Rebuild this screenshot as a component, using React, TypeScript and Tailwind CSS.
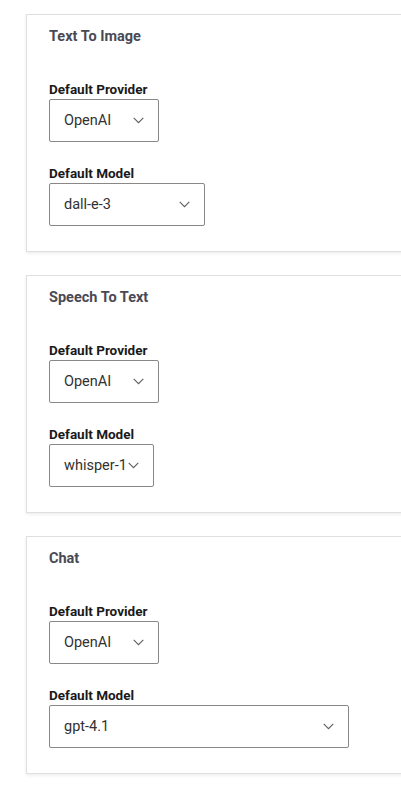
import React from "react";

function Chevron() {
  return (
    <svg width="11" height="7" viewBox="0 0 11 7" fill="none" className="shrink-0">
      <path d="M0.7 0.9 L5.5 5.7 L10.3 0.9" stroke="#605e5c" strokeWidth="1.1" />
    </svg>
  );
}

function Select({ value, width }: { value: string; width: string }) {
  return (
    <div
      className={`${width} h-[43px] border border-[#8a8886] rounded-[2px] flex items-center justify-between pl-[14px] pr-[14px] text-[14.5px] text-[#323130] bg-white`}
    >
      <span className="whitespace-nowrap">{value}</span>
      <Chevron />
    </div>
  );
}

function Card({ title, model, modelWidth }: { title: string; model: string; modelWidth: string }) {
  return (
    <div className="w-[400px] h-[238px] border border-[#e1dfdd] bg-white shadow-[0_1.6px_3.6px_0_rgba(0,0,0,0.08),0_0.3px_0.9px_0_rgba(0,0,0,0.06)] pl-[22px] pt-[12px]">
      <div className="text-[14.5px] leading-[20px] font-bold text-[#4a4a55]">{title}</div>
      <div className="mt-[32px] text-[13.5px] leading-[20px] font-bold text-[#1b1a19]">Default Provider</div>
      <Select value="OpenAI" width="w-[110px]" />
      <div className="mt-[21px] text-[13.5px] leading-[20px] font-bold text-[#1b1a19]">Default Model</div>
      <Select value={model} width={modelWidth} />
    </div>
  );
}

export default function App() {
  return (
    <div
      className="w-[401px] h-[786px] overflow-hidden bg-white pl-[26px] pt-[14px] flex flex-col gap-[23px]"
      style={{ fontFamily: 'Roboto, "Noto Sans", sans-serif' }}
    >
      <Card title="Text To Image" model="dall-e-3" modelWidth="w-[156px]" />
      <Card title="Speech To Text" model="whisper-1" modelWidth="w-[105px]" />
      <Card title="Chat" model="gpt-4.1" modelWidth="w-[300px]" />
    </div>
  );
}
